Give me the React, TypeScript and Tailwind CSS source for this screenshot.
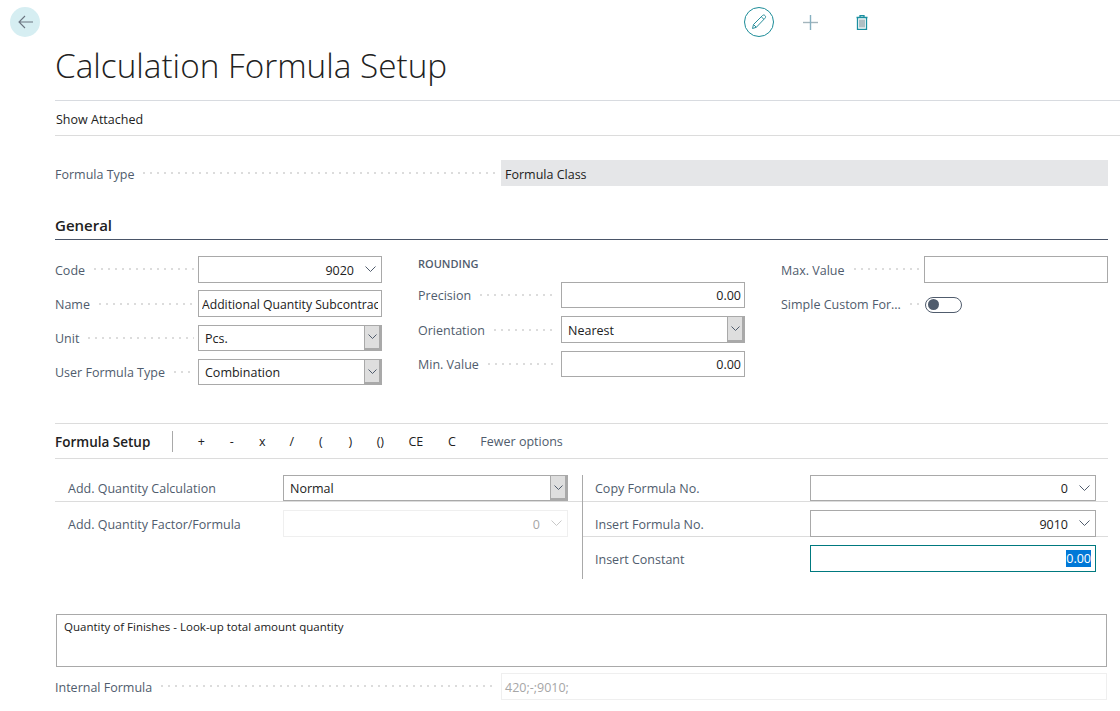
import * as React from "react";

// ---- small drawings ----

function Chevron({ className = "stroke-[#505c6d]" }: { className?: string }) {
  return (
    <svg width="11" height="6" viewBox="0 0 11 6" fill="none" className={className}>
      <path d="M0.5 0.5L5.5 5.5L10.5 0.5" strokeWidth="1" />
    </svg>
  );
}

function Leader() {
  return (
    <div className="mr-[4px] ml-[9px] h-[2px] flex-1 bg-[linear-gradient(to_right,#dcdcdc_2px,transparent_2px)] bg-[length:7px_2px] bg-repeat-x" />
  );
}

// ---- inputs ----

function TextBox({
  value,
  right,
  disabled,
  low,
  clip,
  className = "",
}: {
  value?: string;
  right?: boolean;
  disabled?: boolean;
  low?: boolean;
  clip?: boolean;
  className?: string;
}) {
  return (
    <div
      className={`flex h-[26.5px] items-center border bg-white px-[3px] whitespace-nowrap ${
        low ? "pt-[4px]" : "pt-[3px]"
      } ${disabled ? "border-[#efefef] text-[#a6a6a6]" : "border-[#a9a9a9] text-[#212121]"} ${
        right ? "justify-end" : ""
      } ${className}`}
    >
      <span className={clip ? "min-w-0 overflow-hidden leading-[18px]" : ""}>{value}</span>
    </div>
  );
}

function FocusedBox({ value }: { value: string }) {
  return (
    <div className="flex h-[26.5px] items-center justify-end border border-[#00797f] bg-white pr-[4px]">
      <span className="flex h-[17px] items-center bg-[#0078d7] pt-[2px] text-white">{value}</span>
    </div>
  );
}

function LookupBox({ value, disabled, low }: { value: string; disabled?: boolean; low?: boolean }) {
  return (
    <div
      className={`flex h-[26.5px] items-center justify-end border bg-white pr-[5px] ${
        disabled ? "border-[#efefef] text-[#a6a6a6]" : "border-[#a9a9a9] text-[#212121]"
      }`}
    >
      <span className={`mr-[11px] ${low ? "pt-[4px]" : "pt-[3px]"}`}>{value}</span>
      <Chevron className={disabled ? "stroke-[#c8c8c8]" : "stroke-[#505c6d]"} />
    </div>
  );
}

function SelectBox({ value }: { value: string }) {
  return (
    <div className="flex h-[26.5px] items-center border border-[#a9a9a9] bg-white text-[#212121]">
      <span className="flex-1 pt-[3px] pl-[6px]">{value}</span>
      <div className="flex h-full w-[17px] items-center justify-center border-r-2 border-b-2 border-l border-[#a9a9a9] bg-[#dedede]">
        <svg width="9" height="5" viewBox="0 0 9 5" fill="none" className="stroke-[#505c6d]">
          <path d="M0.5 0.5L4.5 4.5L8.5 0.5" strokeWidth="1" />
        </svg>
      </div>
    </div>
  );
}

function Field({ label, children }: { label: string; children: React.ReactNode }) {
  return (
    <div className="flex items-center">
      <div className="flex w-[143px] shrink-0 items-center text-[#505c6d]">
        <span className="pt-[3px] whitespace-nowrap">{label}</span>
        <Leader />
      </div>
      <div className="min-w-0 flex-1">{children}</div>
    </div>
  );
}

const actions = [
  { label: "+", w: "w-[30px]" },
  { label: "-", w: "w-[31px]" },
  { label: "x", w: "w-[30px]" },
  { label: "/", w: "w-[29px]" },
  { label: "(", w: "w-[29px]" },
  { label: ")", w: "w-[30px]" },
  { label: "()", w: "w-[30px]" },
  { label: "CE", w: "w-[41px]" },
  { label: "C", w: "w-[31px]" },
];

export default function App() {
  return (
    <div className="h-[711px] w-[1120px] overflow-hidden bg-white font-['Open_Sans','Noto_Sans',sans-serif] text-[12.5px] leading-none text-[#212121]">
      {/* Top bar */}
      <div className="flex h-[44px] items-start pt-[7px] pl-[10px]">
        <div className="flex h-[30px] w-[30px] items-center justify-center rounded-full bg-[#d6eef2]">
          <svg width="15" height="14" viewBox="0 0 15 14" fill="none" stroke="#6b7480" strokeWidth="1.1">
            <path d="M15 7H1M7 1L1 7L7 13" />
          </svg>
        </div>
        <div className="ml-[704px] flex h-[30px] w-[30px] items-center justify-center rounded-full border border-[#1c8c98]">
          <svg width="16" height="16" viewBox="0 0 16 16" fill="none" stroke="#2a8f9b" strokeWidth="1">
            <path d="M1.5 14.5L2.5 10.5L11.5 1.5C12.3 0.8 13.3 0.8 14 1.6C14.8 2.4 14.8 3.3 14 4.2L5.3 13.3L1.5 14.5Z" />
            <path d="M2.5 10.5L5.3 13.3M10.3 2.8L13 5.4" />
          </svg>
        </div>
        <div className="ml-[29px] mt-[8px]">
          <svg width="15" height="15" viewBox="0 0 15 15" fill="none" strokeWidth="1.4">
            <path d="M0 7.5H15" stroke="#a3b5bc" />
            <path d="M7.5 0V15" stroke="#86b0c0" />
          </svg>
        </div>
        <div className="ml-[38px] mt-[8px]">
          <svg width="12" height="15" viewBox="0 0 12 15" fill="none" stroke="#1a8fa0" strokeWidth="1.3">
            <path d="M0.5 2.5H11.5M4 2.5V0.7H8V2.5M1.5 2.5V14.5H10.5V2.5" />
            <path d="M4 4.5V12.5M6 4.5V12.5M8 4.5V12.5" stroke="#5e7f88" strokeWidth="1" />
          </svg>
        </div>
      </div>

      {/* Title */}
      <div className="ml-[55px] h-[57px] border-b border-[#d8dbe0]">
        <h1 className="text-[33.3px] leading-[42px] font-light whitespace-nowrap">Calculation Formula Setup</h1>
      </div>

      {/* Action bar */}
      <div className="ml-[55px] flex h-[35px] items-center border-b border-[#dcdcdc] pt-[5px] pl-px">Show Attached</div>

      <div className="ml-[55px] mr-[12px]">
        {/* Formula type */}
        <div className="mt-[24px] flex h-[26px] items-center text-[#505c6d]">
          <div className="flex w-[446px] items-center">
            <span className="pt-[5px]">Formula Type</span>
            <Leader />
          </div>
          <div className="flex h-full flex-1 items-center bg-[#e5e6e8] pt-[5px] pl-[4px] text-[#212121]">
            Formula Class
          </div>
        </div>

        {/* General */}
        <div className="flex h-[54px] items-end border-b border-[#4a5568] pb-[6px] text-[15px] font-semibold">General</div>
        <div className="mt-[16px] grid h-[129px] grid-cols-3 gap-x-[36px]">
          <div className="flex flex-col gap-[7.83px]">
            <Field label="Code">
              <LookupBox value="9020" />
            </Field>
            <Field label="Name">
              <TextBox value="Additional Quantity Subcontract" className="text-[12.2px]" clip />
            </Field>
            <Field label="Unit">
              <SelectBox value="Pcs." />
            </Field>
            <Field label="User Formula Type">
              <SelectBox value="Combination" />
            </Field>
          </div>
          <div className="flex flex-col gap-[7.9px]">
            <div className="flex h-[18px] items-center pb-[4px] text-[11px] font-semibold text-[#505c6d]">ROUNDING</div>
            <Field label="Precision">
              <TextBox value="0.00" right />
            </Field>
            <Field label="Orientation">
              <SelectBox value="Nearest" />
            </Field>
            <Field label="Min. Value">
              <TextBox value="0.00" right />
            </Field>
          </div>
          <div className="flex flex-col gap-[7.83px]">
            <Field label="Max. Value">
              <TextBox />
            </Field>
            <Field label="Simple Custom For...">
              <div className="flex h-[26.5px] items-center pt-[2px] pl-px">
                <div className="flex h-[16px] w-[37px] items-center rounded-full border border-[#505c6d] pl-[2px]">
                  <div className="h-[11px] w-[11px] rounded-full bg-[#505c6d]" />
                </div>
              </div>
            </Field>
          </div>
        </div>

        {/* Formula setup */}
        <div className="mt-[38px] flex h-[36px] items-center border-y border-[#dcdcdc]">
          <span className="pt-[3px] text-[13.5px] font-semibold">Formula Setup</span>
          <div className="ml-[22px] mr-[13px] h-[21px] w-px bg-[#a9a9a9]" />
          {actions.map((a) => (
            <span key={a.label} className={`${a.w} pt-[3px] text-center`}>
              {a.label}
            </span>
          ))}
          <span className="ml-[13px] pt-[3px] text-[#505c6d]">Fewer options</span>
        </div>

        <div className="mt-[16px] flex h-[104px]">
          <div className="w-[527px] shrink-0">
            <div className="flex h-[27px] items-start border-b border-[#dcdcdc] pr-[14px] pl-[13px]">
              <span className="w-[215px] self-center pt-[3px] text-[#505c6d]">Add. Quantity Calculation</span>
              <div className="flex-1 [&>div]:h-[26px]">
                <SelectBox value="Normal" />
              </div>
            </div>
            <div className="mt-[8px] flex h-[27px] items-start pr-[14px] pl-[13px]">
              <span className="w-[215px] self-center pt-[4px] text-[#505c6d]">Add. Quantity Factor/Formula</span>
              <div className="flex-1">
                <LookupBox value="0" disabled low />
              </div>
            </div>
          </div>
          <div className="flex-1 border-l border-[#a9a9a9]">
            <div className="flex h-[27px] items-start border-b border-[#dcdcdc] pr-[12px] pl-[12px]">
              <span className="w-[215px] self-center pt-[3px] text-[#505c6d]">Copy Formula No.</span>
              <div className="flex-1 [&>div]:h-[26px]">
                <LookupBox value="0" />
              </div>
            </div>
            <div className="mt-[8px] flex h-[27px] items-start border-b border-[#dcdcdc] pr-[12px] pl-[12px]">
              <span className="w-[215px] self-center pt-[4px] text-[#505c6d]">Insert Formula No.</span>
              <div className="flex-1">
                <LookupBox value="9010" low />
              </div>
            </div>
            <div className="mt-[8px] flex h-[27px] items-start pr-[12px] pl-[12px]">
              <span className="w-[215px] self-center pt-[4px] text-[#505c6d]">Insert Constant</span>
              <div className="flex-1">
                <FocusedBox value="0.00" />
              </div>
            </div>
          </div>
        </div>

        {/* Description */}
        <div className="mx-px mt-[35px] h-[53px] border border-[#a9a9a9] px-[7px] pt-[6px] text-[11.5px]">
          Quantity of Finishes - Look-up total amount quantity
        </div>

        {/* Internal formula */}
        <div className="mt-[6px] flex items-center text-[#505c6d]">
          <div className="flex w-[446px] items-center">
            <span className="pt-[3px]">Internal Formula</span>
            <Leader />
          </div>
          <div className="mr-px flex-1">
            <TextBox value="420;-;9010;" disabled low />
          </div>
        </div>
      </div>
    </div>
  );
}
